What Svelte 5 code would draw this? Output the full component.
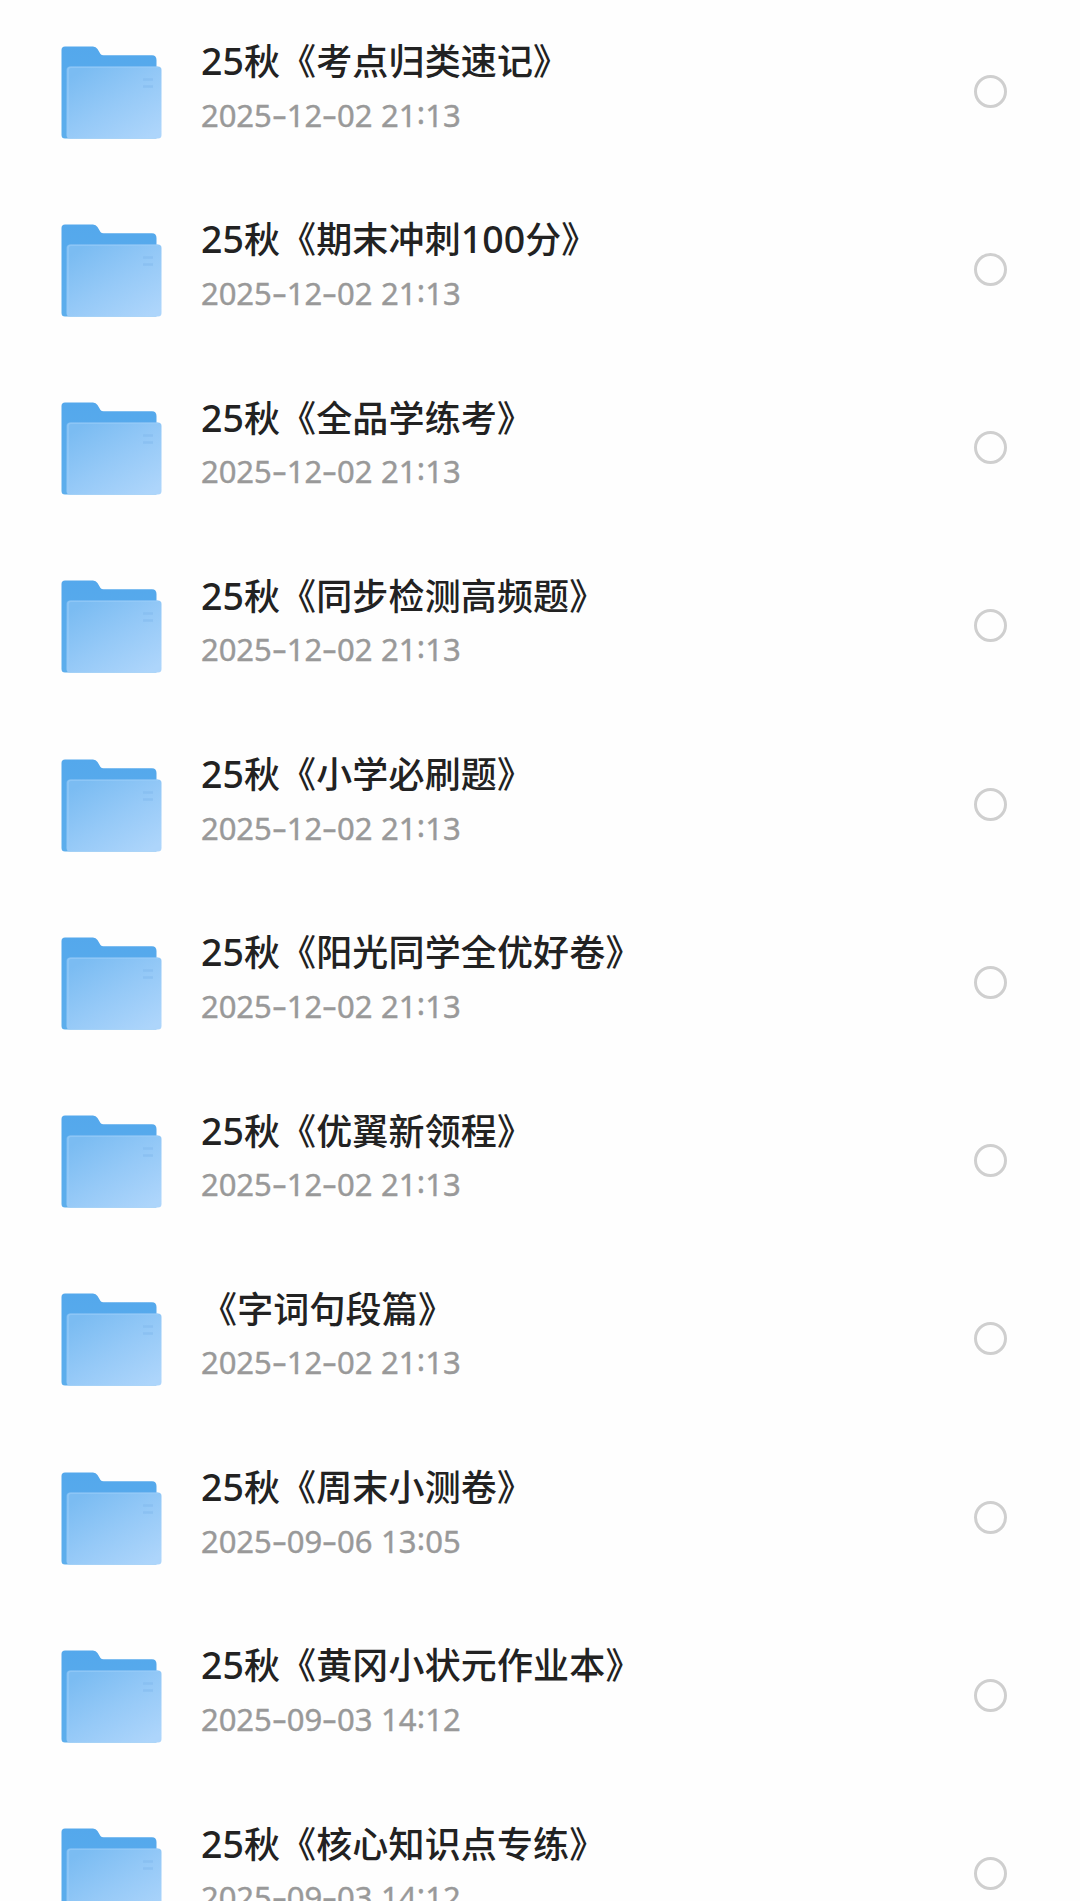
<script>
  const folders = [
    ['25秋《考点归类速记》', '2025-12-02 21:13'],
    ['25秋《期末冲刺100分》', '2025-12-02 21:13'],
    ['25秋《全品学练考》', '2025-12-02 21:13'],
    ['25秋《同步检测高频题》', '2025-12-02 21:13'],
    ['25秋《小学必刷题》', '2025-12-02 21:13'],
    ['25秋《阳光同学全优好卷》', '2025-12-02 21:13'],
    ['25秋《优翼新领程》', '2025-12-02 21:13'],
    ['《字词句段篇》', '2025-12-02 21:13'],
    ['25秋《周末小测卷》', '2025-09-06 13:05'],
    ['25秋《黄冈小状元作业本》', '2025-09-03 14:12'],
    ['25秋《核心知识点专练》', '2025-09-03 14:12']
  ];

  // Digits and separators get their own metrics, so split them from the rest.
  const splitName = (text) => text.split(/(\d+)/).filter(Boolean);
  const splitDate = (text) => text.split(/([-: ])/);
  const kinds = { '-': 'dash', ':': 'colon', ' ': 'space' };
</script>

<svg class="defs" width="0" height="0" aria-hidden="true">
  <defs>
    <linearGradient id="front" x1="0.1" y1="0.1" x2="0.85" y2="1">
      <stop offset="0" stop-color="#7bbcf2" />
      <stop offset="0.5" stop-color="#95c9f7" />
      <stop offset="1" stop-color="#add5fb" />
    </linearGradient>
    <linearGradient id="back" x1="0" y1="0" x2="0" y2="1">
      <stop offset="0" stop-color="#54a8ec" />
      <stop offset="1" stop-color="#5daeec" />
    </linearGradient>
  </defs>
</svg>

<main class="list">
  {#each folders as [name, date]}
    <div class="row">
      <svg class="folder" viewBox="0 0 102 94" aria-hidden="true">
        <path fill="url(#back)" d="M4 .5H32Q35 .5 36.500 3L39.500 8Q40.500 9.300 42.500 9.300H91Q95.500 9.300 95.500 14V92.500H4Q.5 92.500 .5 89V4Q.5 .5 4 .5Z" />
        <rect x="5.500" y="20.500" width="95" height="72" rx="3.500" fill="url(#front)" />
        <path d="M7 91V24Q7 21.200 10 21.200H97" fill="none" stroke="#9acdf8" stroke-opacity=".6" stroke-width="1.600" />
        <path d="M82 33.500H92M82 40.500H92" stroke="#83baee" stroke-opacity=".6" stroke-width="2.600" />
      </svg>
      <div class="info">
        <div class="name">{#each splitName(name) as part}<span class:digits={/\d/.test(part)}>{part}</span>{/each}</div>
        <div class="date">{#each splitDate(date) as part}<span class={kinds[part] ?? 'num'}>{part}</span>{/each}</div>
      </div>
      <span class="check"></span>
    </div>
  {/each}
</main>

<style>
  :global(body) {
    background: #fefefe;
    overflow: hidden;
  }
  .defs {
    display: block;
  }
  .list {
    height: 1901px;
    overflow: hidden;
    padding-top: 1.5px;
    box-sizing: border-box;
  }
  .row {
    height: 178.25px;
    box-sizing: border-box;
    display: flex;
    align-items: flex-start;
    padding: 30.5px 73px 0 61px;
  }
  .folder {
    width: 102px;
    height: 94px;
    margin-top: 13.5px;
    flex: none;
  }
  .info {
    flex: 1;
    margin-left: 38px;
    white-space: nowrap;
  }
  .name {
    font: 500 36px/54px "Noto Sans CJK SC", sans-serif;
    height: 54px;
    letter-spacing: 0.15px;
    color: #222;
  }
  .digits {
    font-family: "Noto Sans", sans-serif;
    font-size: 37.5px;
    line-height: 1;
    letter-spacing: 0;
  }
  .date {
    display: flex;
    font: 400 31px/48px "Noto Sans", sans-serif;
    letter-spacing: -0.05px;
    color: #999;
    -webkit-text-stroke: 0.4px #999;
    margin-top: 4.5px;
  }
  .dash {
    width: 15px;
    text-align: center;
    transform: translateY(-1px) scaleX(1.5);
  }
  .colon {
    width: 9px;
    text-align: center;
    transform: translateY(-3px);
  }
  .space {
    width: 8.5px;
  }
  .check {
    width: 33px;
    height: 33px;
    box-sizing: border-box;
    border: 3px solid #cfcfcf;
    border-radius: 50%;
    margin-top: 42.5px;
    flex: none;
  }
</style>
